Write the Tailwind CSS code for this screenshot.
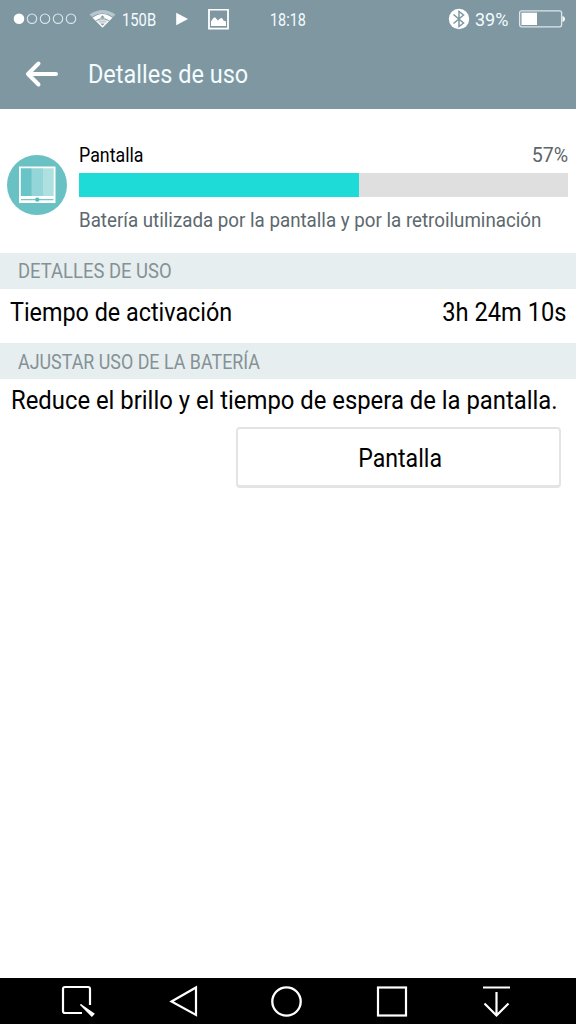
<!DOCTYPE html>
<html lang="es">
<head>
<meta charset="utf-8">
<title>Detalles de uso</title>
<script src="https://cdn.jsdelivr.net/npm/@tailwindcss/browser@4"></script>
</head>
<body class="flex h-[1024px] w-[576px] flex-col overflow-hidden bg-white font-['Roboto','Noto_Sans',sans-serif] text-black">
<header class="h-[109px] shrink-0 bg-[#7f97a1] text-[#f3fcff]">
  <div class="flex h-[38px] items-center whitespace-nowrap text-[18px]">
    <svg class="ml-3 h-4 w-[66px] shrink-0" viewBox="0 0 66 16" fill="none" stroke="#dce9ee" stroke-width="1.1">
      <circle cx="7" cy="7.7" r="5.3" fill="#fff" stroke="none"/><circle cx="20" cy="7.7" r="4.7"/><circle cx="33" cy="7.7" r="4.7"/><circle cx="46" cy="7.7" r="4.7"/><circle cx="59" cy="7.7" r="4.7"/>
    </svg>
    <svg class="ml-[11px] h-5 w-[27px] shrink-0" viewBox="0 0 27 20">
      <path d="M.5 5.500Q13.500-3.500 26.500 5.500L24 8Q13.500 1.200 3 8Z" fill="#b4c6ce"/>
      <path d="M3.500 8.800Q13.500 1 23.500 8.800L20.500 11.800Q13.500 6 6.500 11.800Z" fill="#fff"/>
      <path d="M7 12.300Q13.500 7 20 12.300L13.500 18.800Z" fill="#fff"/>
      <path d="M13.500 6.300L11.300 8.800H15.700Z M13.500 16.800L11.300 14.600H15.700Z" fill="#7f97a1"/>
      <path d="M8.500 10.900H18.500M9.500 12.900H17.500" stroke="#7f97a1" stroke-width=".8"/>
    </svg>
    <span class="ml-[6px] w-9 origin-left scale-x-[.82]">150B</span>
    <svg class="ml-[18px] h-3.5 w-3 shrink-0" viewBox="0 0 12 14"><path d="M.2 .7L12 7L.2 13.300Z" fill="#fff"/></svg>
    <svg class="ml-[20px] h-[21px] w-[21px] shrink-0" viewBox="0 0 21 21"><rect x="1" y=".6" width="19" height="19" fill="none" stroke="#fff" stroke-width="1.800"/><path d="M3 17V12.500L5 9.500Q7 7.500 8.500 10L10 11.500Q12 8.500 14 9L15.500 11.500L18 12.500V17Z" fill="#fff"/></svg>
    <span class="ml-[41px] w-[176px]"><span class="inline-block origin-left scale-x-[.8]">18:18</span></span>
    <svg class="ml-[2px] h-[22px] w-[22px] shrink-0" viewBox="0 0 22 22"><circle cx="11" cy="11" r="10.200" fill="#fff"/><path d="M5.500 6.500L15.500 15L11 18.500V3.500L15.500 7L5.500 15.500" fill="none" stroke="#7f97a1" stroke-width="1.500"/></svg>
    <span class="ml-[5px] w-[35px] shrink-0">39%</span>
    <svg class="ml-[8px] h-[18px] w-[48px] shrink-0" viewBox="0 0 48 18"><rect x="1.600" y=".8" width="42" height="16" rx="2" fill="none" stroke="#dce8ed" stroke-width="1.300"/><rect x="3.500" y="2.700" width="15.500" height="12.300" fill="#fff"/><path d="M44.500 6Q47 6.300 47 9Q47 11.700 44.500 12Z" fill="#fff"/></svg>
  </div>
  <div class="flex h-[71px] items-center pl-[25px]">
    <svg class="h-7 w-[34px] shrink-0" viewBox="0 0 34 28" fill="none" stroke="#fff" stroke-width="4" stroke-linecap="round"><path d="M3 14H31M13.500 3.500L3 14L13.500 24.500" stroke-linejoin="round"/></svg>
    <h1 class="mt-[2px] ml-[28px] origin-left scale-x-[.94] pl-[1px] text-[25px] leading-8 whitespace-nowrap">Detalles de uso</h1>
  </div>
</header>
<main class="flex grow flex-col">
  <section class="flex h-[144px] shrink-0 pt-[35px] pr-2 pl-[7px]">
    <svg class="mt-[11px] h-[60px] w-[60px] shrink-0" viewBox="0 0 60 60">
      <circle cx="30" cy="30" r="30" fill="#69c1c4"/>
      <rect x="13" y="13" width="11.500" height="29" fill="#68c4c7"/><rect x="24.500" y="13" width="11.500" height="29" fill="#93d5d8"/><rect x="36" y="13" width="11" height="29" fill="#aee0df"/>
      <path d="M12 11.500H48.500V48H12ZM13.800 13.300V41H46.700V13.300Z" fill="#fff" fill-rule="evenodd"/>
      <path d="M14 44.600H46.500" stroke="#75c6c9" stroke-width="1.200"/><circle cx="30.300" cy="44.600" r="2.200" fill="#58babd"/>
    </svg>
    <div class="ml-3 min-w-0 grow">
      <div class="flex h-[29px] justify-between text-[20px] leading-[22px]">
        <span class="origin-left scale-x-[.89]">Pantalla</span>
        <span class="origin-right scale-x-[.98] text-[#5c6569]">57%</span>
      </div>
      <div class="h-6 bg-[#dfdfdf]"><div class="h-full bg-[#1edbd7]" style="width:57.2%"></div></div>
      <p class="mt-[11px] w-[494px] origin-left scale-x-[.937] text-[20px] leading-6 whitespace-nowrap text-[#5c686d]">Batería utilizada por la pantalla y por la retroiluminación</p>
    </div>
  </section>
  <h2 class="flex h-9 shrink-0 items-center bg-[#e6eeef] pl-[18px] text-[20px] text-[#859195]"><span class="origin-left scale-x-[.922]">DETALLES DE USO</span></h2>
  <div class="flex h-[54px] shrink-0 justify-between pt-2 pr-[10px] pl-[10px] text-[26px] leading-[30px]">
    <span class="origin-left scale-x-[.898]">Tiempo de activación</span>
    <span class="origin-right scale-x-[.91]">3h 24m 10s</span>
  </div>
  <h2 class="flex h-9 shrink-0 items-center bg-[#e6eeef] pt-px pl-[18px] text-[20px] text-[#859195]"><span class="origin-left scale-x-[.893]">AJUSTAR USO DE LA BATERÍA</span></h2>
  <p class="mt-[6px] ml-[11px] w-[597px] shrink-0 origin-left scale-x-[.917] text-[26px] leading-[30px] whitespace-nowrap">Reduce el brillo y el tiempo de espera de la pantalla.</p>
  <button class="mt-3 mr-[15px] flex h-[61px] w-[325px] shrink-0 items-center justify-center self-end rounded-[4px] border-2 border-b-3 border-[#e3e4e5] bg-white pt-[2px] pl-[3px] text-[26px]"><span class="scale-x-[.89]">Pantalla</span></button>
</main>
<nav class="flex h-[46px] shrink-0 items-center justify-between bg-black pr-[62px] pl-[60px]">
  <svg class="h-9 w-9" viewBox="0 0 36 36" fill="none" stroke="#fff" stroke-width="2.200"><path d="M22 30H5Q3 30 3 28V6Q3 4 5 4H28Q30 4 30 6V22"/><path d="M20.500 21.500L33.800 30.800L31.800 33Z" fill="#fff" stroke-width="1.500"/></svg>
  <svg class="h-9 w-9" viewBox="0 0 36 36" fill="none" stroke="#fff" stroke-width="2.200"><path d="M6.500 18.500L31 4.500V32Z"/></svg>
  <svg class="h-9 w-9" viewBox="0 0 36 36" fill="none" stroke="#fff" stroke-width="2.300"><circle cx="17.500" cy="18.500" r="14.200"/></svg>
  <svg class="h-9 w-9" viewBox="0 0 36 36" fill="none" stroke="#fff" stroke-width="2.200"><rect x="4" y="4.500" width="28" height="28"/></svg>
  <svg class="h-9 w-9" viewBox="0 0 36 36" fill="none" stroke="#fff" stroke-width="2.200"><path d="M5 4.500H32M18.500 9V32.500M6.500 20.500L18.500 32.500L30.500 20.500"/></svg>
</nav>
</body>
</html>
